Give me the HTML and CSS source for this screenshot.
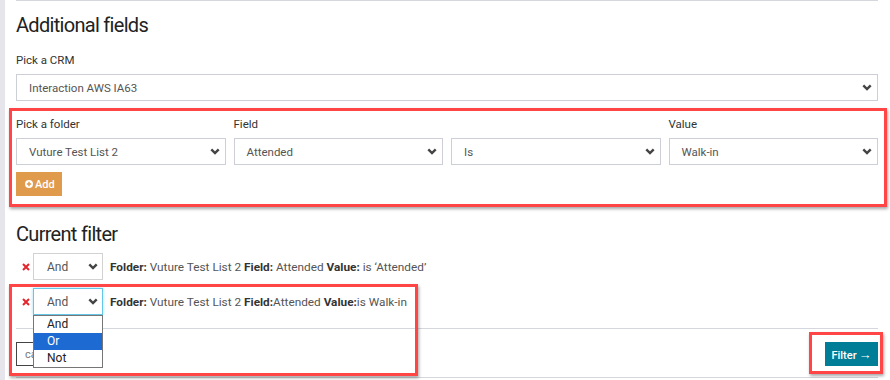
FILE: index.html
```html
<!DOCTYPE html>
<html lang="en">
<head>
    <meta charset="UTF-8">
    <title>Additional fields</title>
    <link rel="stylesheet" href="styles.css">
</head>
<body>
<div class="page">
    <div class="panel-top"></div>

    <h2 class="section-title">Additional fields</h2>

    <label class="field-label">Pick a CRM</label>
    <div class="select">
        <span>Interaction AWS IA63</span>
        <svg class="chevron" viewBox="0 0 10 7"><polyline points="1.3,1.3 5,5 8.7,1.3"/></svg>
    </div>

    <!-- folder / field / operator / value -->
    <div class="folder-row">
        <div class="col">
            <label class="field-label">Pick a folder</label>
            <div class="select">
                <span>Vuture Test List 2</span>
                <svg class="chevron" viewBox="0 0 10 7"><polyline points="1.3,1.3 5,5 8.7,1.3"/></svg>
            </div>
        </div>
        <div class="col">
            <label class="field-label">Field</label>
            <div class="select">
                <span>Attended</span>
                <svg class="chevron" viewBox="0 0 10 7"><polyline points="1.3,1.3 5,5 8.7,1.3"/></svg>
            </div>
        </div>
        <div class="col">
            <label class="field-label">&nbsp;</label>
            <div class="select">
                <span>Is</span>
                <svg class="chevron" viewBox="0 0 10 7"><polyline points="1.3,1.3 5,5 8.7,1.3"/></svg>
            </div>
        </div>
        <div class="col">
            <label class="field-label">Value</label>
            <div class="select">
                <span>Walk-in</span>
                <svg class="chevron" viewBox="0 0 10 7"><polyline points="1.3,1.3 5,5 8.7,1.3"/></svg>
            </div>
        </div>
    </div>

    <button class="btn-add">
        <svg class="plus" viewBox="0 0 10 10"><circle cx="5" cy="5" r="5"/><path d="M5 2.3v5.4M2.3 5h5.4"/></svg>Add
    </button>

    <h2 class="section-title current">Current filter</h2>

    <ul class="filter-list">
        <li>
            <svg class="remove" viewBox="0 0 8 8"><path d="M1 1l6 6M7 1l-6 6"/></svg>
            <div class="select small">
                <span>And</span>
                <svg class="chevron" viewBox="0 0 10 7"><polyline points="1.3,1.3 5,5 8.7,1.3"/></svg>
            </div>
            <span class="desc"><b>Folder:</b> Vuture Test List 2 <b>Field:</b> Attended <b>Value:</b> is ‘Attended’</span>
        </li>
        <li>
            <svg class="remove" viewBox="0 0 8 8"><path d="M1 1l6 6M7 1l-6 6"/></svg>
            <div class="select small focused">
                <span>And</span>
                <svg class="chevron" viewBox="0 0 10 7"><polyline points="1.3,1.3 5,5 8.7,1.3"/></svg>
                <ul class="options">
                    <li>And</li>
                    <li class="active">Or</li>
                    <li>Not</li>
                </ul>
            </div>
            <span class="desc"><b>Folder:</b> Vuture Test List 2 <b>Field:</b>Attended <b>Value:</b>is Walk-in</span>
        </li>
    </ul>

    <div class="panel-footer">
        <button class="btn-cancel">ca</button>
        <button class="btn-filter">Filter<span class="arrow">→</span></button>
    </div>

    <!-- annotation boxes -->
    <div class="mark mark-fields"></div>
    <div class="mark mark-filter"></div>
    <div class="mark mark-button"></div>
</div>
</body>
</html>
```

FILE: styles.css
```css
*{
    margin: 0;
    padding: 0;
    box-sizing: border-box;
}
body{
    width: 890px;
    height: 380px;
    overflow: hidden;
    background: #fff;
    font-family: Roboto, "Liberation Sans", sans-serif;
    font-size: 11.5px;
    color: #444;
}
.page{
    position: relative;
    height: 380px;
    border-left: 5px solid #e5e5eb;
    padding: 0 12px 0 11px;
}
.panel-top{
    border-top: 1px solid #d4d7dd;
}

.section-title{
    margin-top: 12px;
    font-size: 20px;
    line-height: 24px;
    font-weight: 400;
    letter-spacing: -0.7px;
    color: #222;
}
.section-title.current{
    margin-top: 26px;
}

.field-label{
    display: block;
    margin-top: 16px;
    height: 15px;
    line-height: 15px;
    font-size: 11.5px;
    color: #333;
}

.select{
    position: relative;
    display: flex;
    align-items: center;
    justify-content: space-between;
    margin-top: 6px;
    height: 27px;
    padding: 0 5px 0 12px;
    border: 1px solid #ccd0d6;
    background: #fff;
    color: #555;
    font-size: 11.5px;
}
.chevron{
    width: 10px;
    height: 7px;
}
.chevron polyline{
    fill: none;
    stroke: #444;
    stroke-width: 2.4;
}

.folder-row{
    display: grid;
    grid-template-columns: repeat(4, 1fr);
    column-gap: 8px;
}

.btn-add{
    display: flex;
    align-items: center;
    gap: 2px;
    margin-top: 7px;
    height: 24px;
    width: 46px;
    padding-left: 9px;
    border: 0;
    background: #e09a4b;
    color: #fff;
    font-family: inherit;
    font-size: 11px;
    font-weight: 500;
}
.plus{
    width: 8px;
    height: 8px;
}
.plus circle{
    fill: #fff;
}
.plus path{
    stroke: #e09a4b;
    stroke-width: 1.8;
}

.filter-list{
    list-style: none;
    margin-top: 7px;
}
.filter-list > li{
    display: flex;
    align-items: center;
    height: 27px;
    padding-left: 6px;
}
.filter-list > li + li{
    margin-top: 8px;
}
.remove{
    width: 8px;
    height: 8px;
    margin-right: 3px;
}
.remove path{
    stroke: #e3262d;
    stroke-width: 2;
}
.select.small{
    margin-top: 0;
    width: 70px;
    padding: 0 4px 0 13px;
    border-color: #d2d2d2;
    color: #555;
    font-size: 12px;
}
.select.focused{
    border-color: #66c6e8;
    box-shadow: 0 0 3px rgba(102, 198, 232, 0.6);
}
.desc{
    margin-left: 7px;
    font-size: 11.8px;
    color: #555;
}
.desc b{
    color: #333;
    font-weight: 700;
}

.options{
    position: absolute;
    top: 26px;
    left: -1px;
    width: 70px;
    list-style: none;
    border: 1px solid #767676;
    background: #fff;
    z-index: 2;
}
.options li{
    height: 17px;
    line-height: 17px;
    padding-left: 13px;
    font-size: 12px;
    color: #222;
}
.options li.active{
    background: #1d6ad2;
    color: #fff;
}

.panel-footer{
    display: flex;
    justify-content: space-between;
    align-items: center;
    margin-top: 13px;
    padding: 13px 0 11px;
    border-top: 1px solid #d4d7dd;
    border-bottom: 1px solid #d4d7dd;
}
.btn-cancel{
    height: 24px;
    width: 70px;
    padding-left: 8px;
    text-align: left;
    border: 1px solid #444;
    background: #fff;
    color: #777;
    font-family: inherit;
    font-size: 11px;
}
.btn-filter{
    height: 24px;
    width: 53px;
    border: 0;
    background: #007e97;
    color: #fff;
    font-family: inherit;
    font-size: 11px;
    font-weight: 500;
}
.arrow{
    margin-left: 2px;
    font-size: 13px;
}

.mark{
    position: absolute;
    border: 3px solid #ff4545;
    box-shadow: 1px 2px 3px rgba(0, 0, 0, 0.35);
    z-index: 3;
}
.mark-fields{
    left: 4px;
    top: 108px;
    width: 878px;
    height: 99px;
}
.mark-filter{
    left: 4px;
    top: 284px;
    width: 409px;
    height: 92px;
}
.mark-button{
    left: 804px;
    top: 332px;
    width: 74px;
    height: 42px;
}
```
